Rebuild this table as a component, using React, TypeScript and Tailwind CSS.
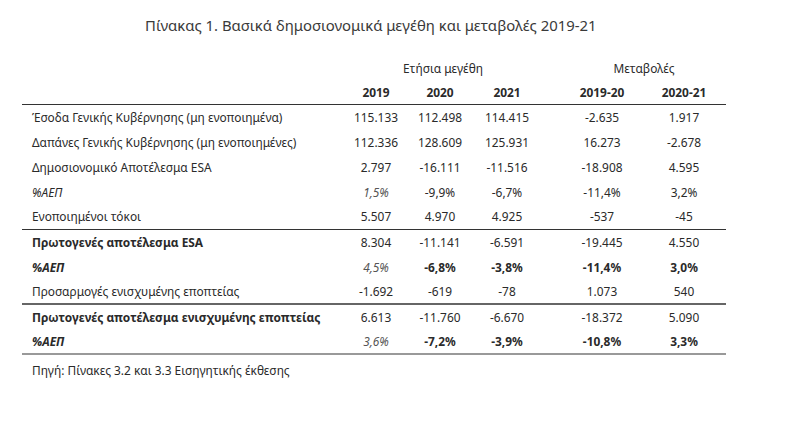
import React from 'react';

type Row = {
  label: string;
  values: string[];
  bold?: boolean;
  pct?: boolean;
  lineAfter?: 'dark' | 'mid' | 'light';
};

const rows: Row[] = [
  { label: 'Έσοδα Γενικής Κυβέρνησης (μη ενοποιημένα)', values: ['115.133', '112.498', '114.415', '-2.635', '1.917'] },
  { label: 'Δαπάνες Γενικής Κυβέρνησης (μη ενοποιημένες)', values: ['112.336', '128.609', '125.931', '16.273', '-2.678'] },
  { label: 'Δημοσιονομικό Αποτέλεσμα ESA', values: ['2.797', '-16.111', '-11.516', '-18.908', '4.595'] },
  { label: '%ΑΕΠ', values: ['1,5%', '-9,9%', '-6,7%', '-11,4%', '3,2%'], pct: true },
  { label: 'Ενοποιημένοι τόκοι', values: ['5.507', '4.970', '4.925', '-537', '-45'], lineAfter: 'dark' },
  { label: 'Πρωτογενές αποτέλεσμα ESA', values: ['8.304', '-11.141', '-6.591', '-19.445', '4.550'], bold: true },
  { label: '%ΑΕΠ', values: ['4,5%', '-6,8%', '-3,8%', '-11,4%', '3,0%'], bold: true, pct: true },
  { label: 'Προσαρμογές ενισχυμένης εποπτείας', values: ['-1.692', '-619', '-78', '1.073', '540'], lineAfter: 'mid' },
  { label: 'Πρωτογενές αποτέλεσμα ενισχυμένης εποπτείας', values: ['6.613', '-11.760', '-6.670', '-18.372', '5.090'], bold: true },
  { label: '%ΑΕΠ', values: ['3,6%', '-7,2%', '-3,9%', '-10,8%', '3,3%'], bold: true, pct: true, lineAfter: 'light' },
];

const cols = 'grid grid-cols-[322px_64px_64px_70px_20px_80px_84px]';

export default function App() {
  return (
    <div className="w-[790px] h-[441px] bg-white text-[#2a2a2a] font-['Noto_Sans',sans-serif]">
      <div className="pt-[14px] pl-[145px] text-[14.9px] leading-[22px] text-[#3a3a3a]">
        Πίνακας 1. Βασικά δημοσιονομικά μεγέθη και μεταβολές 2019-21
      </div>

      <div className="ml-[22px] mt-[21px] w-[704px] text-[11.9px]">
        {/* group headers */}
        <div className={`${cols} h-[24px] items-center`}>
          <div />
          <div className="col-span-3 text-center">Ετήσια μεγέθη</div>
          <div />
          <div className="col-span-2 text-center">Μεταβολές</div>
        </div>
        <div className={`${cols} h-[24px] items-center font-bold border-b border-[#333]`}>
          <div />
          <div className="text-center">2019</div>
          <div className="text-center">2020</div>
          <div className="text-center">2021</div>
          <div />
          <div className="text-center">2019-20</div>
          <div className="text-center">2020-21</div>
        </div>

        {rows.map((r, i) => {
          const line =
            r.lineAfter === 'dark'
              ? 'border-b border-[#333]'
              : r.lineAfter === 'mid'
              ? 'border-b-2 border-[#666]'
              : r.lineAfter === 'light'
              ? 'border-b-2 border-[#999]'
              : '';
          return (
            <div key={i} className={`${cols} h-[25px] items-center ${line}`}>
              <div className={`pl-[10px] ${r.bold ? 'font-bold' : ''} ${r.pct ? 'italic' : ''}`}>{r.label}</div>
              {r.values.map((v, j) => (
                <React.Fragment key={j}>
                  {j === 3 && <div />}
                  <div
                    className={`text-center ${
                      r.pct && j === 0 ? 'italic text-[#555]' : r.bold && r.pct ? 'font-bold' : ''
                    }`}
                  >
                    {v}
                  </div>
                </React.Fragment>
              ))}
            </div>
          );
        })}

        <div className="pl-[10px] pt-[7px]">Πηγή: Πίνακες 3.2 και 3.3 Εισηγητικής έκθεσης</div>
      </div>
    </div>
  );
}
